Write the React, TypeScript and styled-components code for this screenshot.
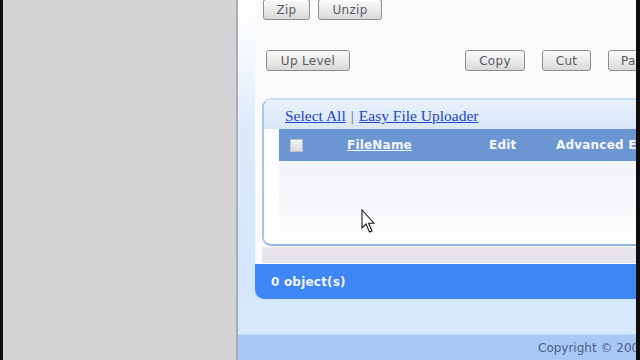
import styled, { createGlobalStyle } from 'styled-components';

const GlobalStyle = createGlobalStyle`
  html, body {
    margin: 0;
    padding: 0;
    overflow: hidden;
  }
`;

const Screen = styled.div`
  display: flex;
  width: 640px;
  height: 360px;
  overflow: hidden;
  background: #000;
`;

const Edge = styled.div<{ w: number }>`
  width: ${({ w }) => w}px;
  flex-shrink: 0;
  background: #0d0d0d;
`;

const SidePane = styled.div`
  width: 233px;
  flex-shrink: 0;
  background: #d3d2d4;
  border-right: 2px solid #adacb0;
`;

const Page = styled.div`
  position: relative;
  flex: 1;
  display: flex;
  flex-direction: column;
  overflow: hidden;
  background: linear-gradient(#ffffff 0px, #f4f8fe 60px, #dbeafb 130px, #d6e7fb 260px);
`;

const Sheet = styled.div`
  width: 560px;
  margin-left: 17px;
  height: 264px;
  flex-shrink: 0;
  display: flex;
  flex-direction: column;
  background: #fbfbfd;
`;

const ButtonRow = styled.div<{ top: number; left: number }>`
  display: flex;
  align-items: center;
  margin-top: ${({ top }) => top}px;
  padding-left: ${({ left }) => left}px;
`;

const Button = styled.button<{ w: number; gapAfter?: number }>`
  width: ${({ w }) => w}px;
  height: 21px;
  margin-right: ${({ gapAfter }) => gapAfter ?? 8}px;
  padding: 0;
  border: 1px solid #8d8d90;
  border-radius: 3px;
  background: linear-gradient(#fafafa, #e9e9ea 55%, #d8d8da);
  box-shadow: inset 0 1px 0 #fff;
  color: #5a5a5e;
  font-family: 'DejaVu Sans', Verdana, sans-serif;
  font-size: 12px;
  letter-spacing: 0.3px;
  text-align: center;
`;

const Spacer = styled.div<{ w: number }>`
  width: ${({ w }) => w}px;
  flex-shrink: 0;
`;

const BoxWrap = styled.div`
  margin-top: 27px;
  margin-left: 7px;
  padding-bottom: 3px;
  border-bottom: 1px solid #ffffff;
  flex: 1;
  background: linear-gradient(#fbfbfd 0, #fbfbfd 148px, #e6e5ea 150px, #ebe3e8 153px, #e4e3e8 155px, #e4e3e8 100%);
`;

const Box = styled.div`
  height: 144px;
  border: 2px solid #c9dcf3;
  border-bottom-color: #8fb4e4;
  border-left-color: #a7c4ea;
  border-right: none;
  border-radius: 9px 0 0 9px;
  background: #ffffff;
  overflow: hidden;
`;

const LinkBar = styled.div`
  height: 29px;
  display: flex;
  align-items: center;
  padding-left: 21px;
  padding-top: 3px;
  box-sizing: border-box;
  gap: 5px;
  background: linear-gradient(#e9f1fb, #d8e7f8);
  font-family: 'Liberation Serif', 'Times New Roman', serif;
  font-size: 15.5px;
`;

const Link = styled.a`
  color: #2343c9;
  text-decoration: underline;
  cursor: pointer;
`;

const Sep = styled.span`
  color: #6a7080;
`;

const TableArea = styled.div`
  padding-left: 15px;
  background: #ffffff;
`;

const HeadRow = styled.div`
  height: 32px;
  display: grid;
  grid-template-columns: 68px 142px 67px auto;
  align-items: center;
  background: #6c96d2;
  color: #f4f7fc;
  font-family: 'DejaVu Sans', Verdana, sans-serif;
  font-size: 12px;
  font-weight: bold;
  letter-spacing: 0.2px;
`;

const HeadCell = styled.div`
  display: flex;
  white-space: nowrap;
`;

const Check = styled.span`
  display: block;
  margin-left: 11px;
  width: 11px;
  height: 11px;
  border: 1px solid #b8c3d2;
  background: linear-gradient(#f4f4f4, #dcdcdc);
`;

const SortLink = styled.span`
  text-decoration: underline;
`;

const Rows = styled.div`
  height: 81px;
  background: linear-gradient(#f3f4f9 0, #f6f7fb 40px, #ffffff 81px);
`;

const StatusBar = styled.div`
  margin-left: 17px;
  height: 35px;
  flex-shrink: 0;
  display: flex;
  align-items: center;
  padding-left: 16px;
  padding-top: 1px;
  box-sizing: border-box;
  background: #3e85f5;
  border-bottom-left-radius: 9px;
  color: #f2f6fe;
  font-family: 'DejaVu Sans', Verdana, sans-serif;
  font-size: 12px;
  font-weight: bold;
  letter-spacing: 0.2px;
`;

const Band = styled.div`
  height: 35px;
  flex-shrink: 0;
  background: #d6e8fb;
`;

const Footer = styled.div`
  flex: 1;
  display: flex;
  align-items: center;
  padding-left: 300px;
  background: #a8c8f5;
  border-top: 1px solid #c3d8f6;
  color: #4d5d88;
  font-family: 'DejaVu Sans', Verdana, sans-serif;
  font-size: 12px;
  white-space: nowrap;
`;

const Pointer = styled.svg`
  position: absolute;
  left: 123px;
  top: 209px;
`;

export default function App() {
  return (
    <>
      <GlobalStyle />
      <Screen>
        <Edge w={3} />
        <SidePane />
        <Page>
          <Sheet>
            <ButtonRow top={-1} left={8}>
              <Button w={47}>Zip</Button>
              <Button w={64}>Unzip</Button>
            </ButtonRow>
            <ButtonRow top={30} left={11}>
              <Button w={84} gapAfter={0}>
                Up Level
              </Button>
              <Spacer w={115} />
              <Button w={60} gapAfter={17}>
                Copy
              </Button>
              <Button w={49} gapAfter={17}>
                Cut
              </Button>
              <Button w={60}>Paste</Button>
            </ButtonRow>
            <BoxWrap>
              <Box>
                <LinkBar>
                  <Link>Select All</Link>
                  <Sep>|</Sep>
                  <Link>Easy File Uploader</Link>
                </LinkBar>
                <TableArea>
                  <HeadRow>
                    <HeadCell>
                      <Check />
                    </HeadCell>
                    <HeadCell>
                      <SortLink>FileName</SortLink>
                    </HeadCell>
                    <HeadCell>Edit</HeadCell>
                    <HeadCell>Advanced Edit</HeadCell>
                  </HeadRow>
                  <Rows />
                </TableArea>
              </Box>
            </BoxWrap>
          </Sheet>
          <StatusBar>0 object(s)</StatusBar>
          <Band />
          <Footer>Copyright © 2008</Footer>
          <Pointer width="14" height="26" viewBox="0 0 14 26">
            <path
              d="M1 1 L1 19 L5 15 L8.5 23 L11 22 L7.6 14.2 L13 14.2 Z"
              fill="#ffffff"
              stroke="#1a1a1a"
              strokeWidth="1.1"
              strokeLinejoin="miter"
            />
          </Pointer>
        </Page>
        <Edge w={4} />
      </Screen>
    </>
  );
}
